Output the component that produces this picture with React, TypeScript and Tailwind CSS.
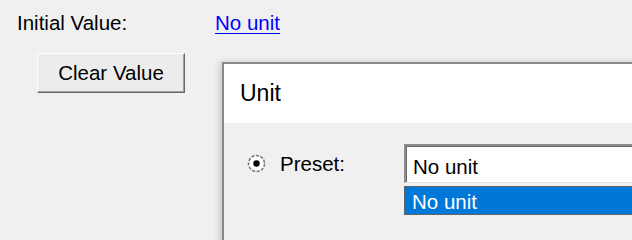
import React from "react";

const sans = { fontFamily: '"Liberation Sans", Arial, sans-serif' };

function RadioDot() {
  return (
    <svg width="19" height="19" viewBox="0 0 19 19" className="shrink-0">
      <circle cx="9.5" cy="9.5" r="8" fill="#ffffff" stroke="#7a7a7a" strokeWidth="1.6" strokeDasharray="3.2 1.4" />
      <circle cx="9.5" cy="9.5" r="3.2" fill="#000000" />
    </svg>
  );
}

export default function App() {
  return (
    <div
      className="relative h-[240px] w-[632px] overflow-hidden bg-[#f0f0f0] text-[20.5px] leading-[23px] text-black"
      style={sans}
    >
      <div className="flex pt-[11px]">
        <span className="ml-[17px] w-[198px] shrink-0">Initial Value:</span>
        <a className="text-[#0000ff] underline decoration-1 underline-offset-[3px]" href="#">
          No unit
        </a>
      </div>

      <div className="mt-[19px] flex items-start">
        <button
          className="ml-[37px] flex h-[40px] w-[148px] shrink-0 items-center justify-center border-t border-l border-t-white border-l-white border-b border-r border-b-[#696969] border-r-[#696969] bg-[#ececec] pb-[2px] shadow-[inset_-1px_-1px_0_#a0a0a0]"
          type="button"
        >
          Clear Value
        </button>

        <div className="ml-[37px] mt-[9px] h-[200px] w-[440px] shrink-0 border-t-2 border-l-2 border-[#8a8a8a] bg-[#f0f0f0] shadow-[-3px_0_6px_rgba(0,0,0,0.15)]">
          <div className="h-[59px] bg-white pl-[16px] pt-[16px] text-[23px] leading-[26px]">Unit</div>

          <div className="flex items-start pl-[23px] pt-[21px]">
            <div className="flex h-[39px] w-[157px] shrink-0 items-center">
              <RadioDot />
              <span className="ml-[14px]">Preset:</span>
            </div>

            <div className="w-[260px] shrink-0">
              <div className="h-[39px] border-t-2 border-l-2 border-b border-t-[#8c8c8c] border-l-[#8c8c8c] border-b-[#e3e3e3] bg-white pl-[7px] pt-[9px] shadow-[inset_1px_1px_0_#6a6a6a]">
                No unit
              </div>
              <div className="mt-[3px] h-[29px] border border-[#646464] bg-[#0078d7] pl-[7px] pt-[3px] text-white">
                No unit
              </div>
            </div>
          </div>
        </div>
      </div>
    </div>
  );
}
